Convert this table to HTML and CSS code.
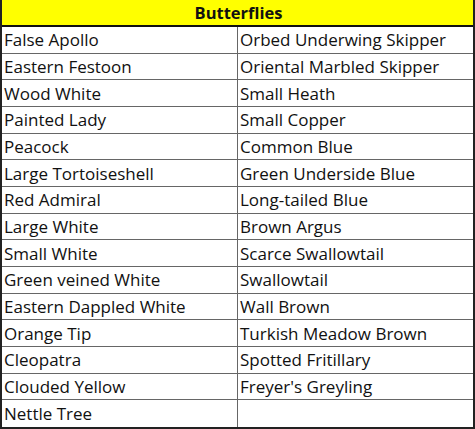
FILE: index.html
```html
<!DOCTYPE html>
<html>
<head>
<meta charset="utf-8">
<link rel="stylesheet" href="styles.css">
</head>
<body>
<div class="sheet">
  <div class="head">Butterflies</div>
  <div class="grid">
    <div class="c">False Apollo</div><div class="c">Orbed Underwing Skipper</div>
    <div class="c">Eastern Festoon</div><div class="c">Oriental Marbled Skipper</div>
    <div class="c">Wood White</div><div class="c">Small Heath</div>
    <div class="c">Painted Lady</div><div class="c">Small Copper</div>
    <div class="c">Peacock</div><div class="c">Common Blue</div>
    <div class="c">Large Tortoiseshell</div><div class="c">Green Underside Blue</div>
    <div class="c">Red Admiral</div><div class="c">Long-tailed Blue</div>
    <div class="c">Large White</div><div class="c">Brown Argus</div>
    <div class="c">Small White</div><div class="c">Scarce Swallowtail</div>
    <div class="c">Green veined White</div><div class="c">Swallowtail</div>
    <div class="c">Eastern Dappled White</div><div class="c">Wall Brown</div>
    <div class="c">Orange Tip</div><div class="c">Turkish Meadow Brown</div>
    <div class="c">Cleopatra</div><div class="c">Spotted Fritillary</div>
    <div class="c">Clouded Yellow</div><div class="c">Freyer's Greyling</div>
    <div class="c">Nettle Tree</div><div class="c"></div>
  </div>
</div>
</body>
</html>
```
FILE: styles.css
```css
html, body { margin: 0; padding: 0; background: #fff; }
.sheet {
  width: 475px;
  height: 429px;
  box-sizing: border-box;
  border-left: 2px solid #222;
  border-right: 2px solid #222;
  border-bottom: 2px solid #222;
  display: flex;
  flex-direction: column;
  font-family: "Open Sans", "Liberation Sans", sans-serif;
  color: #111;
}
.head {
  height: 25px;
  background: #ffff00;
  border-bottom: 2px solid #111;
  text-align: center;
  font-weight: bold;
  font-size: 16.5px;
  line-height: 25px;
  padding-left: 2px;
}
.grid {
  flex: 1;
  display: grid;
  grid-template-columns: 236px 1fr;
  grid-template-rows: repeat(15, 1fr);
}
.c {
  font-size: 17px;
  padding-left: 2px;
  display: flex;
  align-items: center;
  border-bottom: 1px solid #666;
  white-space: nowrap;
}
.c:nth-child(odd) { border-right: 1px solid #666; }
.c:nth-last-child(-n+2) { border-bottom: none; }
```
